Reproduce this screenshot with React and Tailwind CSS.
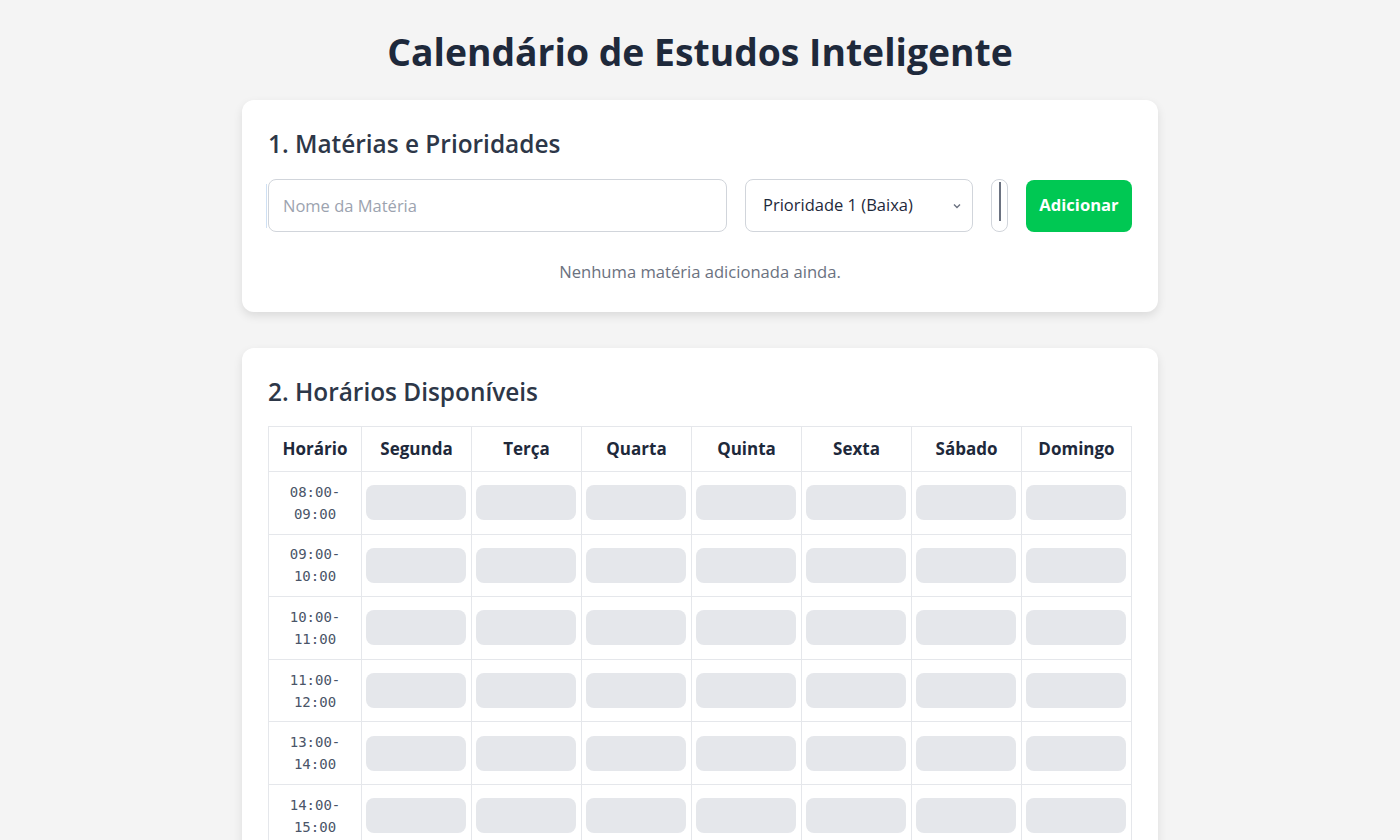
const days = ['Segunda', 'Terça', 'Quarta', 'Quinta', 'Sexta', 'Sábado', 'Domingo'];
const hours = [
  ['08:00-', '09:00'],
  ['09:00-', '10:00'],
  ['10:00-', '11:00'],
  ['11:00-', '12:00'],
  ['13:00-', '14:00'],
  ['14:00-', '15:00'],
  ['15:00-', '16:00'],
  ['16:00-', '17:00'],
];

export default function App() {
  return (
    <div className="min-h-screen bg-[#f4f4f4] pt-[28px] pb-10 font-['Open_Sans','Liberation_Sans',sans-serif] text-[#1f2937]">
      <h1 className="text-center text-[37.3px] leading-[48px] font-bold text-[#1e293b] mb-[24px]">
        Calendário de Estudos Inteligente
      </h1>

      <div className="w-[916px] mx-auto flex flex-col gap-[36px]">
        {/* Materias */}
        <section className="bg-white rounded-xl shadow-[0_4px_10px_rgba(0,0,0,0.1)] px-[26px] pt-[26px] pb-[28px]">
          <h2 className="text-[24.4px] leading-[36px] font-semibold text-[#2d3748]">1. Matérias e Prioridades</h2>
          <div className="flex items-center gap-[18px] mt-[17px] h-[53px]">
            <div className="relative flex-1 h-full">
              <span className="absolute left-[-2px] top-[5px] bottom-[4px] w-px bg-[#cfe0f3]"></span>
              <input
                placeholder="Nome da Matéria"
                className="w-full h-full rounded-lg border border-[#d1d5db] bg-white px-[14px] text-[16.5px] placeholder-[#9ca3af] outline-none"
              />
            </div>
            <div className="relative w-[228px] h-full">
              <div className="w-full h-full rounded-lg border border-[#d1d5db] bg-white flex items-center pl-[17px] pr-[10px] text-[16.5px] text-[#1e293b]">
                <span className="flex-1">Prioridade 1 (Baixa)</span>
                <svg width="10" height="10" viewBox="0 0 10 10" className="text-[#6b7280]">
                  <path d="M2 3.5 L5 6.5 L8 3.5" fill="none" stroke="currentColor" strokeWidth="1.4" />
                </svg>
              </div>
            </div>
            <div className="w-[17px] h-full rounded-lg border border-[#d1d5db] bg-white flex justify-center pt-[2px] pb-[10px]">
              <div className="w-[2px] h-full bg-[#6b7280]"></div>
            </div>
            <button className="w-[106px] h-[52px] rounded-lg bg-[#00c853] text-white font-bold text-[16.6px]">
              Adicionar
            </button>
          </div>
          <p className="mt-[28px] text-center text-[16.6px] leading-[24px] text-[#6b7280]">
            Nenhuma matéria adicionada ainda.
          </p>
        </section>

        {/* Horarios */}
        <section className="bg-white rounded-xl shadow-[0_4px_10px_rgba(0,0,0,0.1)] px-[26px] pt-[26px] pb-[28px]">
          <h2 className="text-[24.4px] leading-[36px] font-semibold text-[#2d3748] mb-[16px]">2. Horários Disponíveis</h2>
          <table className="w-[863px] table-fixed border-collapse">
            <colgroup>
              <col className="w-[93px]" />
              {days.map((d) => (
                <col key={d} className="w-[110px]" />
              ))}
            </colgroup>
            <thead>
              <tr className="h-[45px]">
                <th className="border border-[#e5e7eb] text-[17px] font-bold text-[#1e293b]">Horário</th>
                {days.map((d) => (
                  <th key={d} className="border border-[#e5e7eb] text-[17px] font-bold text-[#1e293b]">
                    {d}
                  </th>
                ))}
              </tr>
            </thead>
            <tbody>
              {hours.map((h) => (
                <tr key={h[0]} className="h-[62.6px]">
                  <td className="border border-[#e5e7eb] text-center font-['DejaVu_Sans_Mono','Liberation_Mono',monospace] text-[14px] leading-[22px] text-[#4a5568]">
                    {h[0]}
                    <br />
                    {h[1]}
                  </td>
                  {days.map((d) => (
                    <td key={d} className="border border-[#e5e7eb] pl-[4px] pr-[5px] align-middle">
                      <div className="w-[100px] h-[35px] rounded-lg bg-[#e5e7eb]"></div>
                    </td>
                  ))}
                </tr>
              ))}
            </tbody>
          </table>
        </section>
      </div>
    </div>
  );
}
